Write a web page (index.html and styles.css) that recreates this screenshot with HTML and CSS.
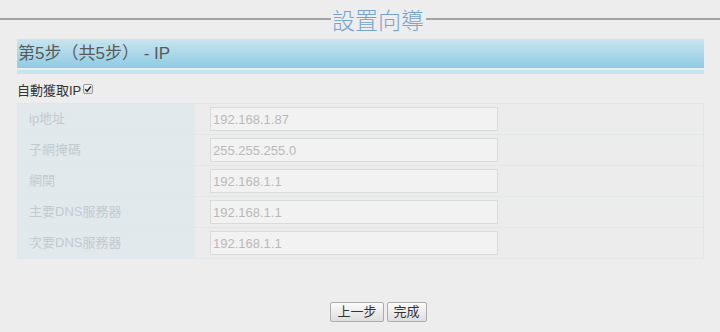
FILE: index.html
```html
<!DOCTYPE html>
<html lang="zh-Hant">
<head>
<meta charset="utf-8">
<title>設置向導</title>
<link rel="stylesheet" href="styles.css">
</head>
<body>
<div class="title-row">
  <span class="title-line left"></span>
  <span class="title-text">設置向導</span>
  <span class="title-line right"></span>
</div>
<div class="content">
  <div class="step-bar">第5步（共5步） - IP</div>
  <div class="step-strip"></div>
  <div class="auto-row">自動獲取IP<span class="auto-check"><svg viewBox="0 0 10 10" width="8" height="8"><path d="M1.5 5.2 L4 7.8 L8.6 1.8" fill="none" stroke="#222" stroke-width="1.8"/></svg></span></div>
  <div class="form-table">
    <div class="row"><div class="label">ip地址</div><div class="cell"><input class="field" value="192.168.1.87" disabled></div></div>
    <div class="row"><div class="label">子網掩碼</div><div class="cell"><input class="field" value="255.255.255.0" disabled></div></div>
    <div class="row"><div class="label">網関</div><div class="cell"><input class="field" value="192.168.1.1" disabled></div></div>
    <div class="row"><div class="label">主要DNS服務器</div><div class="cell"><input class="field" value="192.168.1.1" disabled></div></div>
    <div class="row"><div class="label">次要DNS服務器</div><div class="cell"><input class="field" value="192.168.1.1" disabled></div></div>
  </div>
  <div class="buttons">
    <button class="btn">上一步</button>
    <button class="btn">完成</button>
  </div>
</div>
</body>
</html>
```
FILE: styles.css
```css
html, body {
  margin: 0;
  padding: 0;
  background: #ededed;
  font-family: "Liberation Sans", "Noto Sans CJK TC", sans-serif;
  width: 720px;
  height: 332px;
  overflow: hidden;
}
.title-row {
  display: flex;
  align-items: center;
  height: 38px;
}
.title-line {
  height: 0;
  border-top: 2px solid #a3a3a3;
}
.title-line.left {
  width: 331px;
}
.title-line.right {
  flex: 1;
}
.title-text {
  font-family: "Noto Sans CJK TC", sans-serif;
  font-weight: 300;
  font-size: 23px;
  color: #76a3d2;
  padding: 0 2px 0 1px;
  line-height: 38px;
}
.content {
  margin: 1px 16px 0 17px;
}
.step-bar {
  height: 29px;
  line-height: 29px;
  background: linear-gradient(#c8e5ef, #8fcbe3);
  color: #5a5a5a;
  font-size: 17px;
  padding-left: 1px;
}
.step-strip {
  margin-top: 2px;
  height: 4px;
  background: #c5e5f0;
}
.auto-row {
  display: flex;
  align-items: center;
  margin-top: 8px;
  height: 14px;
  font-size: 13px;
  color: #333;
}
.auto-check {
  box-sizing: border-box;
  display: flex;
  align-items: center;
  justify-content: center;
  width: 10px;
  height: 10px;
  margin-left: 2px;
  border: 1px solid #9a9a9a;
  border-radius: 2px;
  background: linear-gradient(#f6f6f6, #dcdcdc);
}
.form-table {
  margin-top: 7px;
  border: 1px solid #e0e6ea;
}
.row {
  display: flex;
  height: 30px;
  border-top: 1px solid #e0e7eb;
}
.row:first-child {
  border-top: none;
}
.label {
  width: 165px;
  padding-left: 11px;
  background: #e1e9ed;
  color: #c3cace;
  font-size: 13px;
  line-height: 30px;
  border-right: 1px solid #e3e8eb;
}
.cell {
  flex: 1;
  display: flex;
  align-items: center;
  padding-left: 15px;
  background: #ececec;
}
.field {
  box-sizing: border-box;
  width: 288px;
  height: 24px;
  margin: 0;
  padding: 0 2px;
  border: 1px solid #dadada;
  border-radius: 0;
  background: #f2f2f2;
  color: #b9b9b9;
  font-family: "Liberation Sans", "Noto Sans CJK TC", sans-serif;
  font-size: 13px;
}
.buttons {
  display: flex;
  justify-content: center;
  gap: 3px;
  margin-top: 43px;
  padding-left: 36px;
}
.btn {
  height: 20px;
  padding: 0 6px;
  border: 1px solid #adadad;
  border-radius: 2px;
  background: linear-gradient(#fbfbfb, #dedede);
  color: #333;
  font-family: "Liberation Sans", "Noto Sans CJK TC", sans-serif;
  font-size: 13px;
  line-height: 18px;
}
```
